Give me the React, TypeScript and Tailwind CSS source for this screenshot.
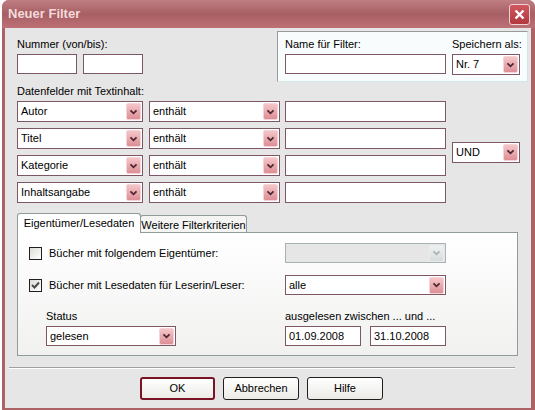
import React from 'react'

function Chevron({ disabled }: { disabled?: boolean }) {
    return (
        <svg width="15" height="16" viewBox="0 0 15 16">
            <polyline
                points="4,6 7.5,9.5 11,6"
                fill="none"
                stroke={disabled ? '#a9b3b5' : '#4c2630'}
                strokeWidth="2"
            />
        </svg>
    )
}

function Select({ value, className, disabled }: { value?: string; className: string; disabled?: boolean }) {
    return (
        <div
            className={`flex items-center justify-between border ${
                disabled ? 'border-[#a6b2b4] bg-[#e6e6e6]' : 'border-[#7d5763] bg-white'
            } ${className}`}
        >
            <span className="pl-[3px] leading-none">{value}</span>
            <div
                className={`mr-px w-[15px] h-[17px] flex items-center justify-center rounded-[2px] border ${
                    disabled
                        ? 'bg-linear-to-b from-[#eef1f1] to-[#d6dcdd] border-[#e8ecec]'
                        : 'bg-linear-to-b from-[#f4c6c9] to-[#dc8f95] border-[#f6d3d6]'
                }`}
            >
                <Chevron disabled={disabled} />
            </div>
        </div>
    )
}

function Input({ value, className }: { value?: string; className: string }) {
    return (
        <div className={`flex items-center border border-[#7d5763] bg-white h-[20px] pl-[3px] ${className}`}>
            {value}
        </div>
    )
}

function Checkbox({ checked }: { checked?: boolean }) {
    return (
        <div className="w-[13px] h-[13px] border border-[#1f1f1f] bg-linear-to-br from-[#dcdcd7] to-white flex items-center justify-center">
            {checked && (
                <svg width="11" height="11" viewBox="0 0 11 11">
                    <polyline points="2,5 4.5,7.5 9,2.5" fill="none" stroke="#4a4a4a" strokeWidth="2" />
                </svg>
            )}
        </div>
    )
}

function Button({ label, def }: { label: string; def?: boolean }) {
    return (
        <div
            className={`h-[23px] flex items-center justify-center rounded-[3px] bg-linear-to-b from-white to-[#ecebe6] ${
                def ? 'w-[75px] border-2 border-[#7a1424]' : 'w-[76px] border border-[#1f1f1f]'
            }`}
        >
            {label}
        </div>
    )
}

const fields = ['Autor', 'Titel', 'Kategorie', 'Inhaltsangabe']

export default function App() {
    return (
        <div className="w-[535px] h-[410px] bg-white overflow-hidden font-['Liberation_Sans',Arial,sans-serif] text-[11px] text-black">
            <div className="ml-[2px] w-[533px] h-[410px] rounded-t-[7px] bg-[#ad6266] flex flex-col">
                {/* Title bar */}
                <div className="h-[28px] rounded-t-[7px] flex items-center pl-[6px] pr-[5px] bg-linear-to-b from-[#bf7e83] via-[#a75f63] to-[#bd7177]">
                    <span className="font-bold text-[13px] text-[#f3dadc]">Neuer Filter</span>
                    <div className="ml-auto w-[21px] h-[21px] rounded-[3px] border border-[#f0d0d2] bg-linear-to-b from-[#d0585f] to-[#b23840] flex items-center justify-center">
                        <svg width="13" height="13" viewBox="0 0 13 13">
                            <path d="M2.5 2.5 L10.5 10.5 M10.5 2.5 L2.5 10.5" stroke="white" strokeWidth="2.4" />
                        </svg>
                    </div>
                </div>

                {/* Body */}
                <div className="ml-[3px] w-[526px] h-[380px] bg-[#e6e6e6]">
                    <div className="flex mt-[3px]">
                        <div className="pl-[12px] pt-[7px]">
                            <div className="leading-[13px]">Nummer (von/bis):</div>
                            <div className="mt-[3px] flex gap-[6px]">
                                <Input className="w-[60px]" />
                                <Input className="w-[60px]" />
                            </div>
                        </div>
                        <div className="ml-auto mr-[3px] w-[251px] h-[51px] border border-t-[#9a9a9a] border-l-[#9a9a9a] border-b-[#d2e6e6] border-r-[#d2e6e6] bg-[#f9fcfc] flex pl-[7px] pt-[6px]">
                            <div className="w-[161px]">
                                <div className="leading-[13px]">Name für Filter:</div>
                                <Input className="mt-[3px] w-[161px]" />
                            </div>
                            <div className="ml-[6px]">
                                <div className="leading-[13px]">Speichern als:</div>
                                <Select value="Nr. 7" className="mt-[3px] w-[68px] h-[21px]" />
                            </div>
                        </div>
                    </div>

                    <div className="mt-[3px] pl-[12px] leading-[13px]">Datenfelder mit Textinhalt:</div>

                    <div className="mt-[3px] pl-[12px] flex">
                        <div className="flex flex-col gap-[6px]">
                            {fields.map((f) => (
                                <div key={f} className="flex">
                                    <Select value={f} className="w-[126px] h-[21px]" />
                                    <Select value="enthält" className="ml-[6px] w-[131px] h-[21px]" />
                                    <Input className="ml-[5px] w-[161px] h-[21px]" />
                                </div>
                            ))}
                        </div>
                        <Select value="UND" className="ml-[6px] self-center w-[68px] h-[21px]" />
                    </div>

                    {/* Tabs */}
                    <div className="mt-[10px] ml-[12px] h-[19px] flex items-end">
                        <div className="relative z-10 -mb-px w-[124px] h-[20px] bg-white border border-b-0 border-[#919b9c] rounded-t-[3px] flex items-center justify-center">
                            Eigentümer/Lesedaten
                        </div>
                        <div className="-ml-px w-[107px] h-[17px] bg-[#f4f4f3] border border-b-0 border-[#919b9c] rounded-t-[3px] flex items-center justify-center pt-[2px]">
                            Weitere Filterkriterien
                        </div>
                    </div>
                    <div className="ml-[12px] w-[501px] h-[124px] border border-[#919b9c] bg-linear-to-b from-white to-[#f1f1f0] pt-[10px]">
                        <div className="flex items-center h-[20px] pl-[11px]">
                            <div className="w-[256px] flex items-center gap-[7px]">
                                <Checkbox />
                                <span>Bücher mit folgendem Eigentümer:</span>
                            </div>
                            <Select disabled className="w-[161px] h-[20px]" />
                        </div>
                        <div className="mt-[12px] flex items-center h-[20px] pl-[11px]">
                            <div className="w-[256px] flex items-center gap-[7px]">
                                <Checkbox checked />
                                <span>Bücher mit Lesedaten für Leserin/Leser:</span>
                            </div>
                            <Select value="alle" className="w-[161px] h-[20px]" />
                        </div>
                        <div className="mt-[15px] flex">
                            <div className="ml-[28px] w-[239px]">
                                <div className="leading-[13px]">Status</div>
                                <Select value="gelesen" className="mt-[3px] w-[130px] h-[20px]" />
                            </div>
                            <div>
                                <div className="leading-[13px]">ausgelesen zwischen ... und ...</div>
                                <div className="mt-[3px] flex gap-[9px]">
                                    <Input value="01.09.2008" className="w-[76px]" />
                                    <Input value="31.10.2008" className="w-[76px]" />
                                </div>
                            </div>
                        </div>
                    </div>

                    <div className="mt-[11px] ml-[4px] w-[506px] border-t border-t-[#a0a0a0] border-b border-b-white" />

                    <div className="mt-[8px] pl-[135px] flex gap-[8px]">
                        <Button label="OK" def />
                        <Button label="Abbrechen" />
                        <Button label="Hilfe" />
                    </div>
                </div>
            </div>
        </div>
    )
}
